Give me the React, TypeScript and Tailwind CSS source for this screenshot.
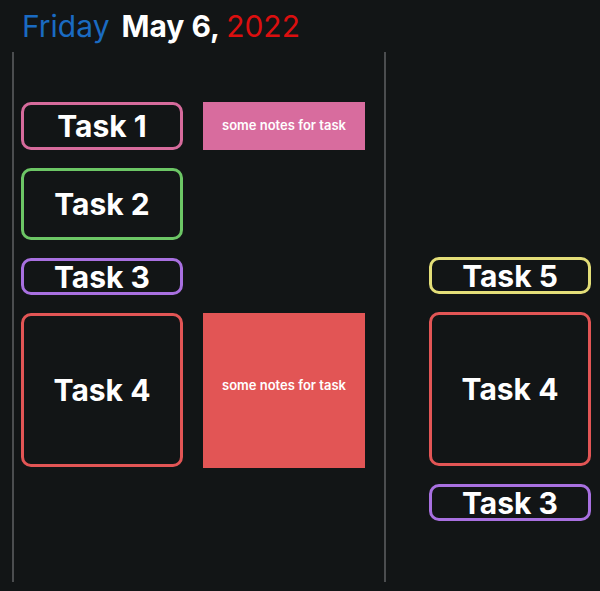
const font = { fontFamily: "Inter, 'Noto Sans', sans-serif" };

function TaskBox({ label, border, h }: { label: string; border: string; h: string }) {
  return (
    <div
      className={`flex w-[162px] items-center justify-center rounded-[10px] border-[3px] bg-[#121516] text-[30px] font-bold leading-none text-white ${border} ${h}`}
    >
      {label}
    </div>
  );
}

function Notes({ bg, h, pad = "" }: { bg: string; h: string; pad?: string }) {
  return (
    <div className={`flex w-[162px] items-center justify-center text-[13px] font-semibold text-white ${bg} ${h} ${pad}`}>
      some notes for task
    </div>
  );
}

export default function App() {
  return (
    <div style={font} className="h-[591px] w-[600px] overflow-hidden bg-[#121516]">
      <div className="flex h-[44px] items-start pl-[22px] pt-[8px] text-[30px] leading-[36px]">
        <span className="text-[#1a6bc2]">Friday</span>
        <span className="ml-[12px] font-bold text-white">May 6,</span>
        <span className="ml-[6px] text-[#db0f0f]">2022</span>
      </div>

      <div className="mt-[8px] flex h-[530px]">
        {/* day one */}
        <div className="ml-[12px] border-l-2 border-[#4b4d4f] pl-[7px] pr-[19px] pt-[50px]">
          <div className="grid grid-cols-[162px_162px] gap-x-[20px] gap-y-[18px]">
            <TaskBox label="Task 1" border="border-[#d66b9c]" h="h-[48px]" />
            <Notes bg="bg-[#d86c9e]" h="h-[48px]" />
            <TaskBox label="Task 2" border="border-[#6cc665]" h="h-[72px]" />
            <div />
            <TaskBox label="Task 3" border="border-[#a870e0]" h="h-[37px]" />
            <div />
            <TaskBox label="Task 4" border="border-[#e25555]" h="h-[154px]" />
            <Notes bg="bg-[#e25555]" h="h-[155px]" pad="pb-[9px]" />
          </div>
        </div>

        {/* day two */}
        <div className="flex flex-col gap-[18px] border-l-2 border-[#4b4d4f] pl-[43px] pt-[205px]">
          <TaskBox label="Task 5" border="border-[#e3de78]" h="h-[37px]" />
          <TaskBox label="Task 4" border="border-[#e25555]" h="h-[154px]" />
          <TaskBox label="Task 3" border="border-[#a870e0]" h="h-[37px]" />
        </div>
      </div>
    </div>
  );
}
